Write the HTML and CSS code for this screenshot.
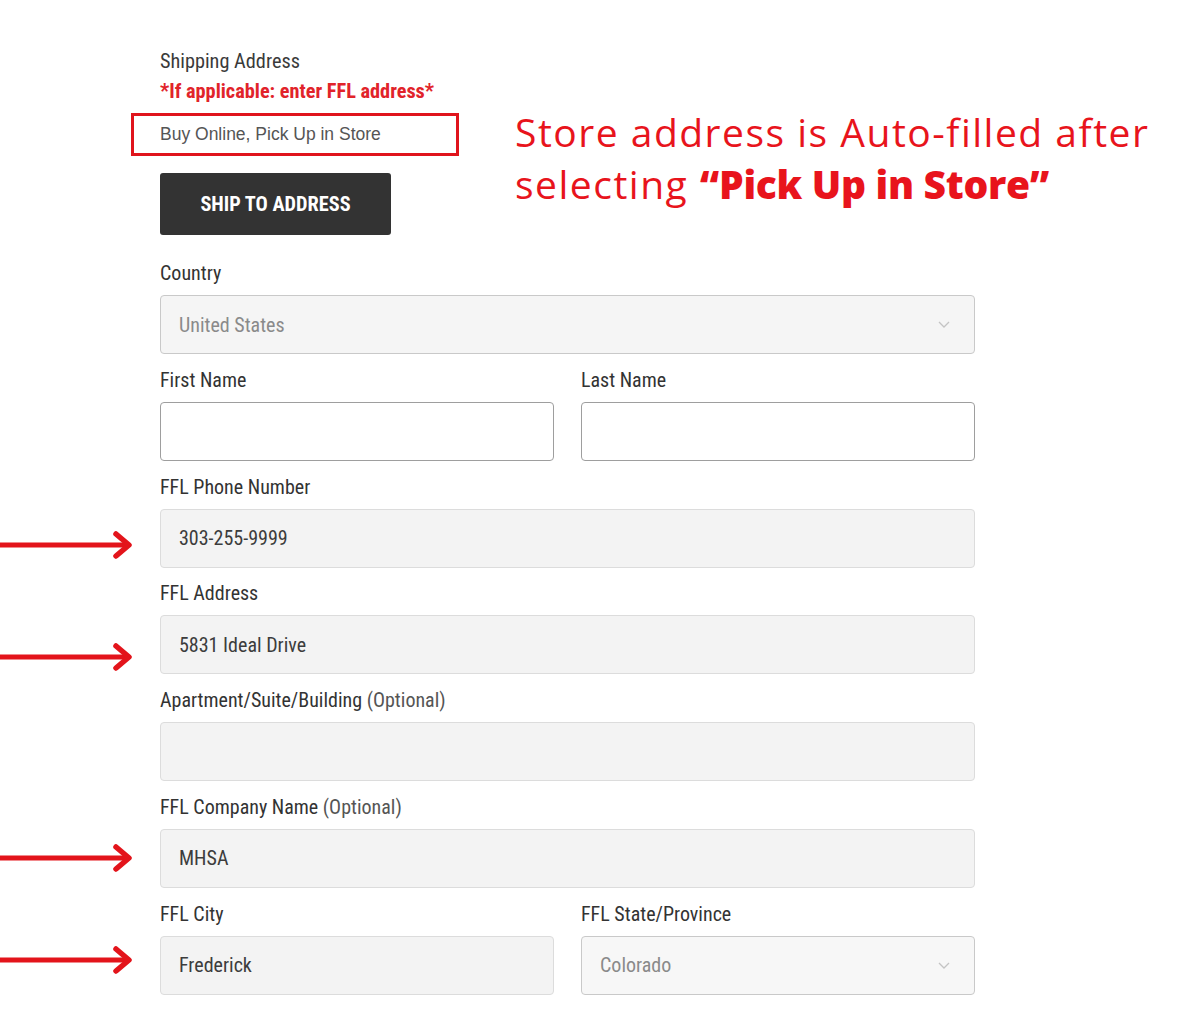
FILE: index.html
```html
<!DOCTYPE html>
<html>
<head>
<meta charset="utf-8">
<link rel="stylesheet" href="styles.css">
</head>
<body>
<div class="page">
  <div class="form">
    <div class="section-title">Shipping Address</div>
    <div class="ffl-note">*If applicable: enter FFL address*</div>
    <div class="pickup">Buy Online, Pick Up in Store</div>
    <button class="ship-btn">SHIP TO ADDRESS</button>

    <div class="field">
      <div class="label">Country</div>
      <div class="box select">
        <span class="value muted">United States</span>
        <svg class="chev" width="12" height="7" viewBox="0 0 12 7"><polyline points="1,1 6,6 11,1" fill="none" stroke="#c4c4c4" stroke-width="1.3"/></svg>
      </div>
    </div>

    <div class="row">
      <div class="field">
        <div class="label">First Name</div>
        <div class="box empty"></div>
      </div>
      <div class="field">
        <div class="label">Last Name</div>
        <div class="box empty"></div>
      </div>
    </div>

    <div class="field">
      <div class="label">FFL Phone Number</div>
      <div class="box filled"><span class="value">303-255-9999</span></div>
    </div>

    <div class="field">
      <div class="label">FFL Address</div>
      <div class="box filled"><span class="value">5831 Ideal Drive</span></div>
    </div>

    <div class="field">
      <div class="label">Apartment/Suite/Building <span class="opt">(Optional)</span></div>
      <div class="box filled"></div>
    </div>

    <div class="field">
      <div class="label">FFL Company Name <span class="opt">(Optional)</span></div>
      <div class="box filled"><span class="value">MHSA</span></div>
    </div>

    <div class="row">
      <div class="field">
        <div class="label">FFL City</div>
        <div class="box filled"><span class="value">Frederick</span></div>
      </div>
      <div class="field">
        <div class="label">FFL State/Province</div>
        <div class="box select state">
          <span class="value muted">Colorado</span>
          <svg class="chev" width="12" height="7" viewBox="0 0 12 7"><polyline points="1,1 6,6 11,1" fill="none" stroke="#c4c4c4" stroke-width="1.3"/></svg>
        </div>
      </div>
    </div>
  </div>

  <div class="annotation">Store address is Auto-filled after<br>selecting <b>“Pick Up in Store”</b></div>

  <svg class="arrow a1" width="136" height="30" viewBox="0 0 136 30"><line x1="0" y1="15" x2="128" y2="15" stroke="#e3141b" stroke-width="5"/><polyline points="116,4 129,15 116,26" fill="none" stroke="#e3141b" stroke-width="5.5" stroke-linecap="round" stroke-linejoin="round"/></svg>
  <svg class="arrow a2" width="136" height="30" viewBox="0 0 136 30"><line x1="0" y1="15" x2="128" y2="15" stroke="#e3141b" stroke-width="5"/><polyline points="116,4 129,15 116,26" fill="none" stroke="#e3141b" stroke-width="5.5" stroke-linecap="round" stroke-linejoin="round"/></svg>
  <svg class="arrow a3" width="136" height="30" viewBox="0 0 136 30"><line x1="0" y1="15" x2="128" y2="15" stroke="#e3141b" stroke-width="5"/><polyline points="116,4 129,15 116,26" fill="none" stroke="#e3141b" stroke-width="5.5" stroke-linecap="round" stroke-linejoin="round"/></svg>
  <svg class="arrow a4" width="136" height="30" viewBox="0 0 136 30"><line x1="0" y1="15" x2="128" y2="15" stroke="#e3141b" stroke-width="5"/><polyline points="116,4 129,15 116,26" fill="none" stroke="#e3141b" stroke-width="5.5" stroke-linecap="round" stroke-linejoin="round"/></svg>
</div>
</body>
</html>
```

FILE: styles.css
```css
* { box-sizing: border-box; }
html, body { margin: 0; padding: 0; background: #fff; }
body { width: 1200px; height: 1013px; overflow: hidden; }

.page {
  position: relative;
  width: 1200px;
  height: 1013px;
  padding: 49px 0 0 160px;
  font-family: "Liberation Sans Narrow", "Roboto Condensed", "Liberation Sans", sans-serif;
  color: #333;
}

.form {
  width: 815px;
  display: flex;
  flex-direction: column;
}

.section-title {
  font-size: 20.3px;
  line-height: 24px;
  color: #3a3a3a;
}

.ffl-note {
  margin-top: 6px;
  font-size: 20.3px;
  line-height: 24px;
  font-weight: bold;
  color: #e1232a;
}

.pickup {
  margin: 10px 0 0 -29px;
  width: 328px;
  height: 43px;
  border: 3px solid #e0141c;
  padding-left: 26px;
  display: flex;
  align-items: center;
  font-family: "Liberation Sans", Arial, sans-serif;
  font-size: 17.5px;
  color: #555;
}

.ship-btn {
  margin-top: 17px;
  width: 231px;
  height: 62px;
  border: none;
  border-radius: 3px;
  background: #333;
  color: #fff;
  font-family: "Liberation Sans Narrow", "Roboto Condensed", sans-serif;
  font-weight: bold;
  font-size: 20.3px;
  padding: 0;
  cursor: pointer;
}

.ship-btn + .field { margin-top: 26px; }

.row {
  display: flex;
  gap: 27px;
}
.row .field { flex: 1; }

.field {
  display: flex;
  flex-direction: column;
  margin-bottom: 13.8px;
}

.label {
  font-size: 20px;
  line-height: 24px;
  color: #333;
  margin-bottom: 10px;
}
.label .opt { color: #555; }

.box {
  height: 59px;
  border-radius: 4px;
  display: flex;
  align-items: center;
  padding: 0 18px;
}
.box.empty {
  background: #fff;
  border: 1px solid #9e9e9e;
}
.box.filled {
  background: #f3f3f3;
  border: 1px solid #dcdcdc;
}
.box.select {
  background: #f5f5f5;
  border: 1px solid #c9c9c9;
  justify-content: space-between;
  padding-right: 24px;
}
.box.state { background: #f7f7f7; }

.value {
  font-size: 20px;
  color: #3c3c3c;
}
.value.muted { color: #8a8a8a; }

.annotation {
  position: absolute;
  left: 515px;
  top: 106px;
  font-family: "Open Sans", "Noto Sans", sans-serif;
  font-size: 39px;
  line-height: 52px;
  color: #e8141c;
  letter-spacing: 1.5px;
  white-space: nowrap;
}
.annotation b { font-weight: 800; letter-spacing: -0.3px; }

.arrow {
  position: absolute;
  left: 0;
}
.a1 { top: 530px; }
.a2 { top: 642px; }
.a3 { top: 843px; }
.a4 { top: 945px; }
```
